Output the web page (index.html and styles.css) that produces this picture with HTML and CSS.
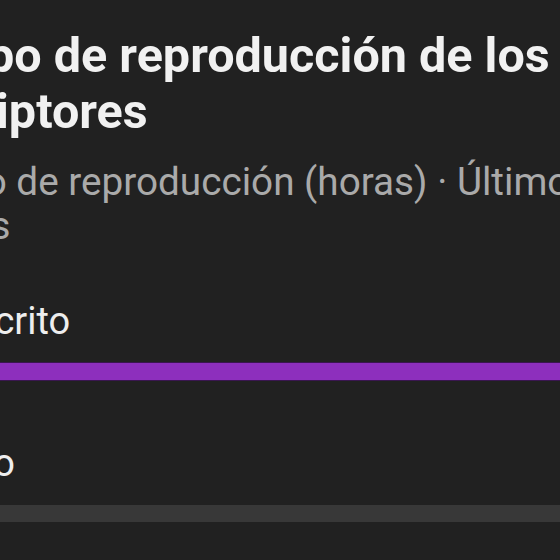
FILE: index.html
```html
<!DOCTYPE html>
<html lang="es">
<head>
    <meta charset="UTF-8">
    <meta name="viewport" content="width=device-width, initial-scale=1.0">
    <title>Tiempo de reproducción de los suscriptores</title>
    <link rel="stylesheet" href="styles.css">
</head>
<body>
    <div class="card">
        <h1 class="card-title">Tiempo de reproducción de los suscriptores</h1>
        <p class="card-subtitle">Tiempo de reproducción (horas) · <span class="range">Últimos 28 días</span></p>
        <div class="rows">
            <div class="row">
                <span class="row-label">No suscrito</span>
                <div class="track"><div class="fill" style="width: 100%"></div></div>
            </div>
            <div class="row">
                <span class="row-label">Suscrito</span>
                <div class="track"><div class="fill" style="width: 0%"></div></div>
            </div>
        </div>
    </div>
</body>
</html>
```

FILE: styles.css
```css
body {
    margin: 0;
    height: 100vh;
    overflow: hidden;
    background-color: #212121;
    font-family: Roboto, "Liberation Sans", Arial, sans-serif;
    color: #f1f1f1;
}
.card {
    width: 740px;
    margin-left: -124px;
    padding-top: 28px;
}
.card-title {
    margin: 0;
    font-size: 48.5px;
    font-weight: bold;
    line-height: 56px;
    color: #f1f1f1;
}
.card-subtitle {
    margin: 20px 0 0;
    font-size: 38.7px;
    line-height: 44px;
    color: #aaaaaa;
}
.range {
    word-spacing: 9px;
}
.rows {
    display: flex;
    flex-direction: column;
    gap: 61px;
    margin-top: 51px;
}
.row {
    display: flex;
    flex-direction: column;
    gap: 20px;
}
.row-label {
    font-size: 38px;
    line-height: 44px;
    color: #eeeeee;
}
.track {
    height: 17px;
    background: #383838;
}
.fill {
    height: 100%;
    background: #8d2fbd;
    box-shadow: 0 0 0 1px #3a1650;
}
```
